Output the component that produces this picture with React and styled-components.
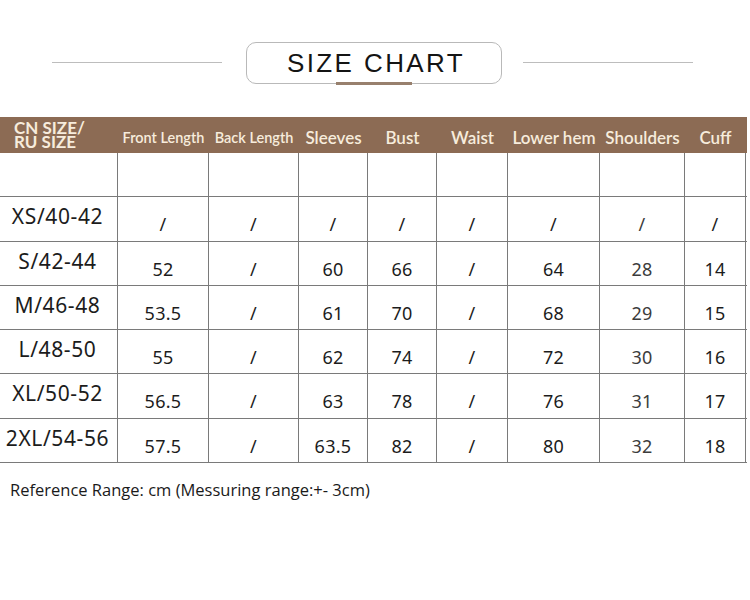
import React from "react";
import styled, { createGlobalStyle } from "styled-components";

const columns = [
  { label: "CN SIZE/\nRU SIZE", w: 118, size: 17 },
  { label: "Front Length", w: 91, size: 14.5 },
  { label: "Back Length", w: 90, size: 14.5 },
  { label: "Sleeves", w: 69, size: 17 },
  { label: "Bust", w: 69, size: 17 },
  { label: "Waist", w: 71, size: 17 },
  { label: "Lower hem", w: 92, size: 17 },
  { label: "Shoulders", w: 85, size: 17 },
  { label: "Cuff", w: 61, size: 17 },
];

const rows = [
  { h: 44, cells: ["", "", "", "", "", "", "", "", ""] },
  { h: 45, cells: ["XS/40-42", "/", "/", "/", "/", "/", "/", "/", "/"] },
  { h: 44, cells: ["S/42-44", "52", "/", "60", "66", "/", "64", "28", "14"] },
  { h: 44, cells: ["M/46-48", "53.5", "/", "61", "70", "/", "68", "29", "15"] },
  { h: 44, cells: ["L/48-50", "55", "/", "62", "74", "/", "72", "30", "16"] },
  { h: 45, cells: ["XL/50-52", "56.5", "/", "63", "78", "/", "76", "31", "17"] },
  { h: 44, cells: ["2XL/54-56", "57.5", "/", "63.5", "82", "/", "80", "32", "18"] },
];

const GlobalStyle = createGlobalStyle`
  body {
    margin: 0;
    background: #fff;
    font-family: "Lato", "Liberation Sans", sans-serif;
  }
`;

const Page = styled.div`
  width: 750px;
  height: 600px;
  padding-top: 42px;
  box-sizing: border-box;
`;

const TitleRow = styled.div`
  display: flex;
  align-items: center;
  height: 42px;
`;

const Rule = styled.div`
  height: 1px;
  background: #bdbdbd;
  width: 170px;
  margin-left: ${(p) => p.$ml}px;
  margin-top: -1px;
`;

const TitleBox = styled.div`
  position: relative;
  box-sizing: border-box;
  width: 256px;
  height: 42px;
  margin-left: 24px;
  margin-right: 21px;
  border: 1px solid #b9b9b9;
  border-radius: 10px;
  display: flex;
  align-items: center;
  justify-content: center;
  font-family: "Liberation Sans", Arial, sans-serif;
  font-size: 26px;
  letter-spacing: 2.4px;
  color: #141414;
  padding-left: 4px;
`;

const Underline = styled.span`
  position: absolute;
  left: 89px;
  bottom: -2px;
  width: 76px;
  height: 3px;
  background: #98806d;
`;

const Table = styled.div`
  margin-top: 33px;
  width: 747px;
`;

const HeadRow = styled.div`
  display: flex;
  height: 36px;
  background: #8c6b54;
`;

const HeadCell = styled.div`
  width: ${(p) => p.$w}px;
  flex: none;
  display: flex;
  align-items: center;
  justify-content: ${(p) => (p.$first ? "flex-start" : "center")};
  padding-left: ${(p) => (p.$first ? 14 : 0)}px;
  box-sizing: border-box;
  color: #f7ecdc;
  font-family: "Lato", "Liberation Sans", sans-serif;
  font-weight: ${(p) => (p.$first ? 700 : 600)};
  font-size: ${(p) => p.$size}px;
  line-height: ${(p) => (p.$first ? "14px" : "normal")};
  white-space: pre;
  padding-top: ${(p) => (p.$first ? 0 : 4)}px;
`;

const Row = styled.div`
  display: flex;
  box-sizing: border-box;
  height: ${(p) => p.$h}px;
  border-bottom: 1px solid #7a7a7a;
`;

const Cell = styled.div`
  width: ${(p) => p.$w}px;
  flex: none;
  box-sizing: border-box;
  border-right: 1px solid #7a7a7a;
  display: flex;
  align-items: center;
  justify-content: center;
  color: ${(p) => (p.$soft ? "#3c3c3c" : "#1c1c1c")};
  font-family: "Noto Sans", "Liberation Sans", sans-serif;
  font-size: ${(p) => (p.$first ? 21 : 18)}px;
  letter-spacing: ${(p) => (p.$first ? 0.6 : 0.3)}px;
  padding-top: ${(p) => (p.$first ? 0 : 10)}px;
  padding-bottom: ${(p) => (p.$first ? 6 : 0)}px;
  padding-right: ${(p) => (p.$first ? 2 : 0)}px;
`;

const Note = styled.div`
  margin: 15px 0 0 10px;
  font-family: "Open Sans", "Liberation Sans", sans-serif;
  font-size: 16.5px;
  color: #1a1a1a;
`;

export default function App() {
  return (
    <Page>
      <GlobalStyle />
      <TitleRow>
        <Rule $ml={52} />
        <TitleBox>
          SIZE CHART
          <Underline />
        </TitleBox>
        <Rule $ml={0} />
      </TitleRow>

      <Table>
        <HeadRow>
          {columns.map((c, i) => (
            <HeadCell key={i} $w={c.w} $size={c.size} $first={i === 0}>
              {c.label}
            </HeadCell>
          ))}
        </HeadRow>
        {rows.map((r, ri) => (
          <Row key={ri} $h={r.h}>
            {r.cells.map((v, ci) => (
              <Cell key={ci} $w={columns[ci].w} $first={ci === 0} $soft={ci === 7}>
                {v}
              </Cell>
            ))}
          </Row>
        ))}
      </Table>

      <Note>Reference Range: cm (Messuring range:+- 3cm)</Note>
    </Page>
  );
}
